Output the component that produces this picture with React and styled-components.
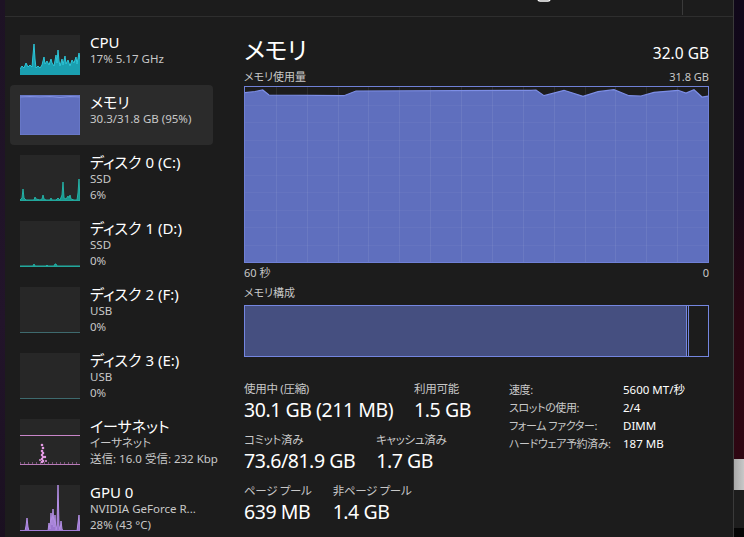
import React from "react";
import styled, { createGlobalStyle } from "styled-components";

const GlobalStyle = createGlobalStyle`
  html, body { margin: 0; padding: 0; background: #000; }
  body {
    font-family: "Noto Sans", "Noto Sans CJK JP", sans-serif;
    font-feature-settings: "palt";
    color: #fff;
    -webkit-font-smoothing: antialiased;
  }
`;

const Desktop = styled.div`
  width: 744px;
  height: 537px;
  display: flex;
  overflow: hidden;
`;

const LeftEdge = styled.div`
  width: 5px;
  background: linear-gradient(180deg, #1d1224 0%, #22142a 60%, #1a1020 100%);
`;

const Window = styled.div`
  width: 728px;
  background: #1c1c1c;
  border-right: 1px solid #3a3a3a;
  display: flex;
  flex-direction: column;
`;

const RightDesktop = styled.div`
  flex: 1;
  display: flex;
  flex-direction: column;
`;

const DeskBlock = styled.div`
  height: ${(p) => p.$h}px;
  background: ${(p) => p.$bg};
  flex: ${(p) => (p.$grow ? 1 : "none")};
`;

const TopBar = styled.div`
  height: 16px;
  border-bottom: 1px solid #2e2e2e;
  display: flex;
  justify-content: flex-end;
  align-items: flex-start;
  padding-right: 50px;
  overflow: hidden;
`;

const CommandButton = styled.div`
  display: flex;
  align-items: center;
  gap: 10px;
  margin-top: -13px;
  margin-right: 29px;
  font-size: 11px;
  line-height: 16px;
  color: #fff;
`;

const BarSeparator = styled.div`
  width: 1px;
  height: 15px;
  background: #3a3a3a;
`;

const Body = styled.div`
  flex: 1;
  display: flex;
  min-height: 0;
`;

const Sidebar = styled.div`
  width: 208px;
  padding: 8px 0 0 5px;
  display: flex;
  flex-direction: column;
  overflow: hidden;
`;

const Item = styled.div`
  width: 203px;
  box-sizing: border-box;
  display: flex;
  align-items: flex-start;
  gap: 10px;
  padding: 10px;
  border-radius: 4px;
  flex: none;
  background: ${(p) => (p.$selected ? "#2b2b2b" : "transparent")};
`;

const Thumb = styled.div`
  width: 60px;
  height: ${(p) => p.$h}px;
  flex: none;
  background: #272727;
  svg { display: block; }
`;

const ItemText = styled.div`
  display: flex;
  flex-direction: column;
  margin-top: -2px;
  margin-bottom: -6px;
  white-space: nowrap;
`;

const ItemTitle = styled.div`
  font-size: 15px;
  line-height: 18px;
  color: #fff;
`;

const ItemSub = styled.div`
  font-size: 11.5px;
  line-height: 16px;
  color: #c8c8c8;
`;

const Main = styled.div`
  flex: 1;
  padding: 18px 24px 0 26px;
  display: flex;
  flex-direction: column;
  min-width: 0;
`;

const Header = styled.div`
  display: flex;
  justify-content: space-between;
  align-items: baseline;
`;

const Title = styled.div`
  font-size: 24px;
  line-height: 30px;
  letter-spacing: -0.3px;
`;

const Total = styled.div`
  font-size: 15.5px;
  line-height: 20px;
`;

const CaptionRow = styled.div`
  display: flex;
  justify-content: space-between;
  font-size: 11px;
  line-height: 14px;
  color: #c8c8c8;
  margin-top: ${(p) => p.$mt || 0}px;
`;

const Chart = styled.div`
  height: 177px;
  margin-top: 2px;
  border: 1px solid #6f80d6;
  box-sizing: border-box;
  svg { display: block; }
`;

const Composition = styled.div`
  height: 52px;
  margin-top: 5px;
  border: 1px solid #7486e0;
  box-sizing: border-box;
  display: flex;
`;

const CompSegment = styled.div`
  width: ${(p) => p.$w}px;
  background: ${(p) => p.$bg};
  border-right: ${(p) => (p.$edge ? "1px solid #7486e0" : "none")};
  border-left: ${(p) => (p.$lead ? "1px solid #7486e0" : "none")};
  flex: ${(p) => (p.$grow ? 1 : "none")};
  margin-left: ${(p) => p.$ml || 0}px;
`;

const Stats = styled.div`
  display: flex;
  margin-top: 24px;
`;

const StatsLeft = styled.div`
  width: 265px;
  display: flex;
  flex-direction: column;
  gap: 9px;
`;

const StatRow = styled.div`
  display: flex;
  gap: 21px;
`;

const Stat = styled.div`
  display: flex;
  flex-direction: column;
  white-space: nowrap;
`;

const StatLabel = styled.div`
  font-size: 11.5px;
  line-height: 16px;
  letter-spacing: -0.3px;
  color: #c8c8c8;
`;

const StatValue = styled.div`
  font-size: 19.5px;
  line-height: 26px;
  letter-spacing: -0.45px;
  color: #fff;
`;

const InfoTable = styled.div`
  display: grid;
  grid-template-columns: 114px auto;
  grid-auto-rows: 18px;
  font-size: 11px;
  line-height: 18px;
  align-content: start;
  white-space: nowrap;
`;

const InfoKey = styled.div`
  color: #c8c8c8;
  letter-spacing: -0.4px;
`;

const InfoVal = styled.div`
  color: #fff;
  font-size: 11.5px;
`;

const toPath = (pts, h) =>
  `M${pts[0][0]},${h} ` + pts.map(([x, y]) => `L${x},${y}`).join(" ") + ` L${pts[pts.length - 1][0]},${h} Z`;
const toLine = (pts) => "M" + pts.map(([x, y]) => `${x},${y}`).join(" L");

const cpuPts = [
  [0, 34], [2, 31], [4, 33], [6, 28], [8, 32], [10, 30], [12, 32], [13, 20], [14, 9], [15, 24],
  [16, 33], [18, 31], [20, 33], [22, 30], [24, 22], [25, 29], [27, 26], [29, 30], [31, 24], [32, 28],
  [34, 31], [36, 20], [37, 28], [38, 15], [39, 26], [40, 31], [42, 24], [43, 30], [45, 21], [46, 29],
  [48, 25], [50, 31], [52, 25], [54, 28], [56, 22], [57, 29], [59, 18], [60, 24],
];

const CpuThumb = () => (
  <svg width="60" height="40">
    <path d={toPath(cpuPts, 40)} fill="#1a9fb0" />
    <path d={toLine(cpuPts)} fill="none" stroke="#2cc6d8" strokeWidth="1" />
  </svg>
);

const MemThumb = () => (
  <svg width="60" height="40">
    <rect x="0" y="0" width="60" height="40" fill="#5f6ebd" />
    <path d="M0,2 L10,1.5 L20,2 L30,1.5 L40,2.5 L50,1.5 L60,2" fill="none" stroke="#8190e0" strokeWidth="1.2" />
    <rect x="0" y="0" width="60" height="40" fill="none" stroke="#7080d0" strokeWidth="1" />
  </svg>
);

const diskPts0 = [
  [0, 45], [2, 43], [3, 34], [4, 43], [6, 45], [14, 45], [15, 42], [16, 44], [20, 45], [22, 44],
  [23, 40], [24, 44], [26, 45], [30, 45], [31, 43], [32, 45], [36, 45], [38, 43], [40, 45],
  [42, 40], [43, 27], [44, 43], [46, 44], [48, 41], [49, 43], [50, 40], [51, 44], [54, 45], [57, 45],
  [58, 38], [59, 24], [60, 45],
];
const diskPts1 = [
  [0, 45], [13, 45], [14, 43], [15, 45], [26, 45], [27, 44], [28, 45], [34, 45], [35, 43], [36, 43], [37, 45], [60, 45],
];

const DiskThumb = ({ pts, dim }) => (
  <svg width="60" height="46">
    {pts && <path d={toPath(pts, 46)} fill="#18988f" />}
    {pts && <path d={toLine(pts)} fill="none" stroke="#24b0a5" strokeWidth="1" />}
    <line x1="0" y1="45.5" x2="60" y2="45.5" stroke={dim ? "#3e6a6e" : "#22a79c"} strokeWidth="1" />
  </svg>
);

const EthThumb = () => {
  const dots = [26, 29, 32, 34, 36, 38, 40, 42, 43];
  return (
    <svg width="60" height="46">
      <line x1="0" y1="16.5" x2="60" y2="16.5" stroke="#c986c9" strokeWidth="1" />
      {dots.map((y, i) => (
        <circle key={i} cx={i % 2 ? 23 : 22} cy={y} r="1.3" fill="#e39ae3" />
      ))}
      <circle cx="25" cy="38" r="1.2" fill="#e39ae3" />
      <circle cx="20" cy="41" r="1" fill="#e39ae3" />
      <circle cx="26" cy="42" r="1" fill="#e39ae3" />
      <path d="M0,44 L60,44" stroke="#c986c9" strokeWidth="1" strokeDasharray="1 3" />
      <line x1="0" y1="45.5" x2="60" y2="45.5" stroke="#b87ab8" strokeWidth="1" />
    </svg>
  );
};

const gpuPts = [
  [0, 46], [5, 46], [6, 41], [7, 33], [8, 42], [9, 46], [28, 46], [29, 38], [30, 44], [31, 28],
  [32, 40], [33, 24], [34, 42], [35, 30], [36, 46], [37, 40], [38, 0], [39, 40], [40, 46], [41, 36],
  [42, 44], [43, 46], [57, 46], [58, 38], [59, 30], [60, 46],
];

const GpuThumb = () => (
  <svg width="60" height="46">
    <path d={toPath(gpuPts, 46)} fill="#9b76cf" />
    <path d={toLine(gpuPts)} fill="none" stroke="#b48fe6" strokeWidth="1" />
    <line x1="0" y1="45.5" x2="60" y2="45.5" stroke="#a27dd6" strokeWidth="1" />
  </svg>
);

const memPts = [
  [0, 5.7], [10, 4.5], [17.7, 3], [24, 8], [99, 8.7], [111, 4], [286, 3.3], [291, 3], [299, 8.7],
  [319, 3.3], [338, 9.3], [353, 4.7], [369, 2.7], [384, 8.7], [396, 9], [409, 5.3], [433, 3.3],
  [441, 6], [449, 2.7], [457, 10], [465, 8.7],
];

const MemoryChart = () => {
  const W = 463;
  const H = 175;
  const cols = 15;
  const rows = 10;
  return (
    <svg width={W} height={H}>
      <path d={toPath(memPts, H)} fill="#5f6fbe" />
      {Array.from({ length: cols - 1 }, (_, i) => {
        const x = Math.round(((i + 1) * W) / cols) + 0.5;
        return <line key={"c" + i} x1={x} y1="0" x2={x} y2={H} stroke="rgba(255,255,255,0.07)" />;
      })}
      {Array.from({ length: rows - 1 }, (_, i) => {
        const y = Math.round(((i + 1) * H) / rows) + 0.5;
        return <line key={"r" + i} x1="0" y1={y} x2={W} y2={y} stroke="rgba(255,255,255,0.04)" />;
      })}
      <path d={toLine(memPts)} fill="none" stroke="#7d8ee6" strokeWidth="1.2" />
    </svg>
  );
};

const items = [
  { title: "CPU", subs: ["17%  5.17 GHz"], h: 40, thumb: <CpuThumb /> },
  { title: "メモリ", subs: ["30.3/31.8 GB (95%)"], h: 40, thumb: <MemThumb />, selected: true },
  { title: "ディスク 0 (C:)", subs: ["SSD", "6%"], h: 46, thumb: <DiskThumb pts={diskPts0} /> },
  { title: "ディスク 1 (D:)", subs: ["SSD", "0%"], h: 46, thumb: <DiskThumb pts={diskPts1} /> },
  { title: "ディスク 2 (F:)", subs: ["USB", "0%"], h: 46, thumb: <DiskThumb dim /> },
  { title: "ディスク 3 (E:)", subs: ["USB", "0%"], h: 46, thumb: <DiskThumb dim /> },
  { title: "イーサネット", subs: ["イーサネット", "送信: 16.0 受信: 232 Kbps"], h: 46, thumb: <EthThumb /> },
  { title: "GPU 0", subs: ["NVIDIA GeForce R...", "28%  (43 °C)"], h: 46, thumb: <GpuThumb /> },
];

const info = [
  ["速度:", "5600 MT/秒"],
  ["スロットの使用:", "2/4"],
  ["フォーム ファクター:", "DIMM"],
  ["ハードウェア予約済み:", "187 MB"],
];

const statRows = [
  [["使用中 (圧縮)", "30.1 GB (211 MB)"], ["利用可能", "1.5 GB"]],
  [["コミット済み", "73.6/81.9 GB"], ["キャッシュ済み", "1.7 GB"]],
  [["ページ プール", "639 MB"], ["非ページ プール", "1.4 GB"]],
];

export default function App() {
  return (
    <>
      <GlobalStyle />
      <Desktop>
        <LeftEdge />
        <Window>
          <TopBar>
            <CommandButton>
              <svg width="14" height="14" viewBox="0 0 14 14">
                <rect x="1" y="1" width="12" height="12" rx="2" fill="none" stroke="#fff" strokeWidth="1.5" />
                <path d="M4,9 L7,11 L10,9" fill="none" stroke="#fff" strokeWidth="1.5" />
              </svg>
              新しいタスクを実行
            </CommandButton>
            <BarSeparator />
          </TopBar>
          <Body>
            <Sidebar>
              {items.map((it) => (
                <Item key={it.title} $selected={it.selected}>
                  <Thumb $h={it.h}>{it.thumb}</Thumb>
                  <ItemText>
                    <ItemTitle>{it.title}</ItemTitle>
                    {it.subs.map((s) => (
                      <ItemSub key={s}>{s}</ItemSub>
                    ))}
                  </ItemText>
                </Item>
              ))}
            </Sidebar>
            <Main>
              <Header>
                <Title>メモリ</Title>
                <Total>32.0 GB</Total>
              </Header>
              <CaptionRow $mt={5}>
                <span>メモリ使用量</span>
                <span>31.8 GB</span>
              </CaptionRow>
              <Chart>
                <MemoryChart />
              </Chart>
              <CaptionRow $mt={3}>
                <span>60 秒</span>
                <span>0</span>
              </CaptionRow>
              <CaptionRow $mt={6}>
                <span>メモリ構成</span>
              </CaptionRow>
              <Composition>
                <CompSegment $w={441} $bg="#454f80" $edge />
                <CompSegment $grow $bg="#1c1c1c" $lead $ml={1} />
              </Composition>
              <Stats>
                <StatsLeft>
                  {statRows.map((row, i) => (
                    <StatRow key={i}>
                      {row.map(([l, v]) => (
                        <Stat key={l}>
                          <StatLabel>{l}</StatLabel>
                          <StatValue>{v}</StatValue>
                        </Stat>
                      ))}
                    </StatRow>
                  ))}
                </StatsLeft>
                <InfoTable>
                  {info.map(([k, v]) => (
                    <React.Fragment key={k}>
                      <InfoKey>{k}</InfoKey>
                      <InfoVal>{v}</InfoVal>
                    </React.Fragment>
                  ))}
                </InfoTable>
              </Stats>
            </Main>
          </Body>
        </Window>
        <RightDesktop>
          <DeskBlock $h={459} $bg="linear-gradient(180deg, #10081a 0%, #140818 40%, #2a0712 70%, #2e0612 100%)" />
          <DeskBlock $h={31} $bg="linear-gradient(90deg, #a8a8a8, #c8c8c8)" />
          <DeskBlock $h={38} $bg="#1d1d1d" />
          <DeskBlock $grow $bg="#050505" />
        </RightDesktop>
      </Desktop>
    </>
  );
}
